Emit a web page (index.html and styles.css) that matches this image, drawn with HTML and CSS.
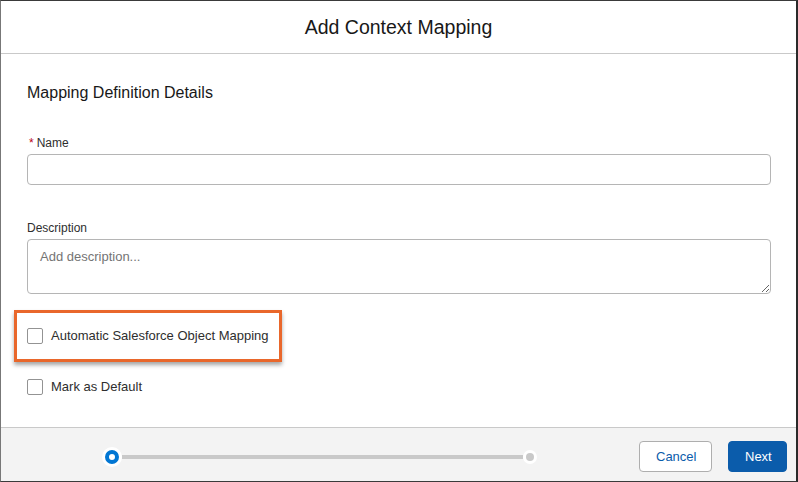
FILE: index.html
```html
<!DOCTYPE html>
<html lang="en">
<head>
  <meta charset="UTF-8" />
  <meta name="viewport" content="width=device-width, initial-scale=1.0"/>
  <title>Add Context Mapping</title>
  <link rel="stylesheet" href="styles.css">
</head>
<body>

  <div class="modal">
    <div class="modal-header">
      <h1>Add Context Mapping</h1>
    </div>

    <div class="modal-body">
      <h2>Mapping Definition Details</h2>

      <div class="field field-name">
        <label for="name"><abbr class="required">*</abbr>Name</label>
        <input type="text" id="name" class="input">
      </div>

      <div class="field field-desc">
        <label for="desc">Description</label>
        <textarea id="desc" class="textarea" placeholder="Add description..."></textarea>
      </div>

      <div class="highlight">
        <label class="checkbox">
          <span class="box"></span>
          Automatic Salesforce Object Mapping
        </label>
      </div>

      <label class="checkbox checkbox-default">
        <span class="box"></span>
        Mark as Default
      </label>
    </div>

    <div class="modal-footer">
      <div class="progress">
        <span class="step step-active"><span class="ring"></span></span>
        <span class="track"></span>
        <span class="step step-end"><span class="dot"></span></span>
      </div>
      <div class="actions">
        <button class="btn btn-neutral">Cancel</button>
        <button class="btn btn-brand">Next</button>
      </div>
    </div>
  </div>

</body>
</html>
```

FILE: styles.css
```css
* {
  box-sizing: border-box;
}

body {
  margin: 0;
  font-family: "Liberation Sans", Arial, sans-serif;
  color: #181818;
  background: #fff;
}

.modal {
  width: 798px;
  height: 482px;
  border: 1px solid #3a3a3a;
  border-left-color: #777;
  border-right: 2px solid #2a2a2a;
  display: flex;
  flex-direction: column;
}

.modal-header {
  height: 53px;
  border-bottom: 1px solid #c9c9c9;
  display: flex;
  align-items: center;
  justify-content: center;
}

.modal-header h1 {
  margin: 0;
  font-size: 19.5px;
  font-weight: normal;
  color: #181818;
}

.modal-body {
  flex: 1;
  padding: 29px 24px 0 26px;
}

.modal-body h2 {
  margin: 0;
  font-size: 16px;
  font-weight: normal;
  line-height: 20px;
}

.field label {
  display: block;
  font-size: 12px;
  line-height: 18px;
  color: #2e2e2e;
  margin-bottom: 2px;
}

.field-name {
  margin-top: 31px;
}

.field-desc {
  margin-top: 34px;
}

.required {
  color: #ba0517;
  text-decoration: none;
  margin: 0 3px 0 2px;
}

.input,
.textarea {
  display: block;
  width: 744px;
  border: 1px solid #b5b5b5;
  border-radius: 4px;
  font-family: inherit;
  font-size: 13px;
  background: #fff;
}

.input {
  height: 31px;
}

.textarea {
  height: 55px;
  padding: 9px 12px;
  resize: vertical;
}

.textarea::placeholder {
  color: #747474;
}

.highlight {
  margin: 16px 0 0 -13px;
  width: 268px;
  height: 52px;
  border: 3px solid #e9672b;
  padding-left: 10px;
  display: flex;
  align-items: center;
  box-shadow: 0 3px 4px rgba(0, 0, 0, 0.35);
}

.checkbox {
  display: flex;
  align-items: center;
  font-size: 13px;
  line-height: 20px;
  color: #2e2e2e;
}

.checkbox-default {
  margin-top: 15px;
}

.box {
  width: 16px;
  height: 16px;
  border: 1px solid #939393;
  border-radius: 2px;
  background: #fff;
  margin-right: 8px;
}

.modal-footer {
  height: 54px;
  border-top: 1px solid #c9c9c9;
  background: #f3f3f3;
  display: flex;
  align-items: center;
  justify-content: space-between;
  padding: 4px 9px 0 101px;
}

.progress {
  display: flex;
  align-items: center;
  width: 435px;
}

.step {
  border-radius: 50%;
  background: #fff;
  display: flex;
  align-items: center;
  justify-content: center;
}

.step-active {
  width: 20px;
  height: 20px;
}

.ring {
  width: 14px;
  height: 14px;
  border-radius: 50%;
  border: 4px solid #0176d3;
}

.step-end {
  width: 14px;
  height: 14px;
}

.dot {
  width: 8px;
  height: 8px;
  border-radius: 50%;
  background: #c9c9c9;
}

.track {
  flex: 1;
  height: 4px;
  background: #c9c9c9;
}

.actions {
  display: flex;
  gap: 16px;
}

.btn {
  height: 31px;
  border-radius: 4px;
  font-family: inherit;
  font-size: 13px;
  padding: 0 16px;
  cursor: pointer;
}

.btn-neutral {
  width: 73px;
  background: #fff;
  border: 1px solid #aeaeae;
  color: #0b5cab;
}

.btn-brand {
  width: 59px;
  background: #0b5cab;
  border: 1px solid #0b5cab;
  color: #fff;
}
```
